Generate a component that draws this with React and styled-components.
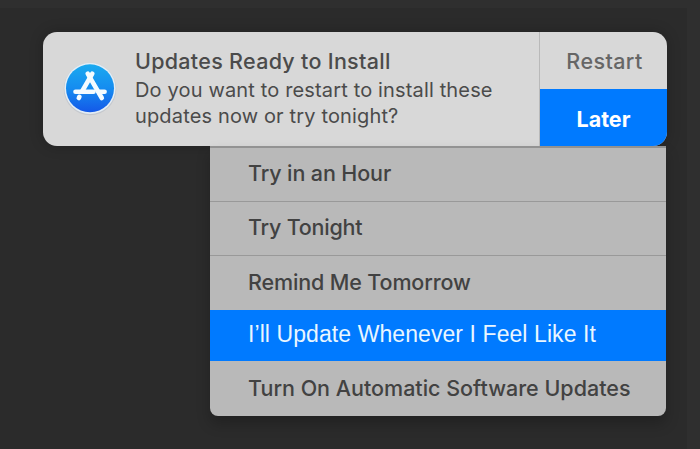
import React from "react";
import styled, { createGlobalStyle } from "styled-components";

const GlobalStyle = createGlobalStyle`
  * { box-sizing: border-box; }
  body { margin: 0; background: #2e2e2e; font-family: Inter, "Liberation Sans", sans-serif; }
`;

const Desktop = styled.main`
  width: 700px;
  height: 449px;
  padding-top: 8px;
  overflow: hidden;
  background: #2f2f2f;
`;

const Backdrop = styled.div`
  width: 687px;
  height: 441px;
  padding: 24px 20px 0 43px;
  background: #2b2b2b;
`;

const Notification = styled.section`
  display: flex;
  width: 624px;
  height: 114px;
  border-radius: 14px;
  overflow: hidden;
  background: #d8d8d8;
  box-shadow: 0 0 14px rgba(0, 0, 0, 0.22);
`;

const AppIcon = styled.svg`
  flex: none;
  width: 54px;
  height: 54px;
  margin: 30px 18px 0 20px;
`;

const Message = styled.div`
  flex: 1;
  padding-top: 16px;
  color: #4b4b4b;
  white-space: nowrap;
`;

const Title = styled.h1`
  margin: 0;
  font-size: 21.5px;
  line-height: 26px;
  font-weight: 500;
  letter-spacing: 0.29px;
`;

const BodyText = styled.p`
  margin: 3px 0 0;
  font-size: 20px;
  line-height: 26px;
  letter-spacing: ${(p) => p.$tracking}px;
`;

const Actions = styled.div`
  display: flex;
  flex-direction: column;
  width: 128px;
  border-left: 1px solid #b9b9b9;
`;

const Action = styled.button`
  height: 57px;
  padding: ${(p) => (p.$primary ? "2px 0 0" : "1px 0 0 2px")};
  border: 0;
  background: ${(p) => (p.$primary ? "#007aff" : "transparent")};
  color: ${(p) => (p.$primary ? "#ffffff" : "#666666")};
  font: ${(p) => (p.$primary ? 700 : 500)} 21.5px Inter, sans-serif;
  letter-spacing: ${(p) => p.$tracking}px;
`;

const Menu = styled.ul`
  width: 455.5px;
  height: 269.5px;
  margin: 0 0 0 167px;
  padding: 0;
  list-style: none;
  overflow: hidden;
  border-top: 2px solid #929292;
  border-radius: 0 0 8px 8px;
  background: #b9b9b9;
  box-shadow: 0 8px 14px rgba(0, 0, 0, 0.22);
`;

const MenuItem = styled.li`
  display: flex;
  align-items: center;
  height: ${(p) => p.$height}px;
  padding: 0 0 ${(p) => p.$lift || 0}px 38px;
  border-bottom: ${(p) => (p.$divider ? "1px solid #999999" : "0")};
  background: ${(p) => (p.$selected ? "#007aff" : "transparent")};
  color: ${(p) => (p.$selected ? "#e9f6ff" : "#424242")};
  font-family: ${(p) => (p.$selected ? '"Liberation Sans", sans-serif' : "Inter, sans-serif")};
  font-size: ${(p) => (p.$selected ? 23 : 21.5)}px;
  font-weight: ${(p) => (p.$selected ? 400 : 450)};
  letter-spacing: ${(p) => p.$tracking}px;
  white-space: nowrap;
`;

const items = [
  { label: "Try in an Hour", height: 54, divider: true, tracking: -0.12, lift: 3 },
  { label: "Try Tonight", height: 54, divider: true, tracking: -0.22, lift: 4 },
  { label: "Remind Me Tomorrow", height: 54, tracking: -0.14, lift: 2 },
  { label: "I’ll Update Whenever I Feel Like It", height: 51, selected: true, tracking: 0.08, lift: 3 },
  { label: "Turn On Automatic Software Updates", height: 54, tracking: 0, lift: 0 },
];

function StoreIcon() {
  return (
    <AppIcon viewBox="0 0 54 54" aria-hidden="true">
      <defs>
        <linearGradient id="store" x1="0" y1="0" x2="0" y2="1">
          <stop offset="0" stopColor="#1aaaf0" />
          <stop offset="0.5" stopColor="#158cf0" />
          <stop offset="1" stopColor="#1458e8" />
        </linearGradient>
      </defs>
      <circle cx="27" cy="27" r="26.2" fill="#b8bdc5" opacity="0.6" />
      <circle cx="27" cy="26.3" r="25.6" fill="#e3edf5" />
      <circle cx="27" cy="26.3" r="24" fill="url(#store)" />
      <g stroke="#f4fbff" strokeWidth="4.6" strokeLinecap="round" fill="none">
        <path d="M24.7 11.7 L38.8 36" />
        <path d="M29.3 11.7 L19.3 29" />
        <path d="M12.5 29.8 H30.5 M36.5 29.8 H41.6" />
        <path d="M16.4 34.8 L15.8 36" />
      </g>
    </AppIcon>
  );
}

export default function App() {
  return (
    <>
      <GlobalStyle />
      <Desktop>
        <Backdrop>
          <Notification>
            <StoreIcon />
            <Message>
              <Title>Updates Ready to Install</Title>
              <BodyText $tracking={0.15}>
                Do you want to restart to install these
                <br />
                updates now or try tonight?
              </BodyText>
            </Message>
            <Actions>
              <Action $tracking={0.4}>Restart</Action>
              <Action $primary $tracking={0}>Later</Action>
            </Actions>
          </Notification>
          <Menu>
            {items.map((item) => (
              <MenuItem
                key={item.label}
                $height={item.height}
                $divider={item.divider}
                $selected={item.selected}
                $tracking={item.tracking}
                $lift={item.lift}
              >
                {item.label}
              </MenuItem>
            ))}
          </Menu>
        </Backdrop>
      </Desktop>
    </>
  );
}
